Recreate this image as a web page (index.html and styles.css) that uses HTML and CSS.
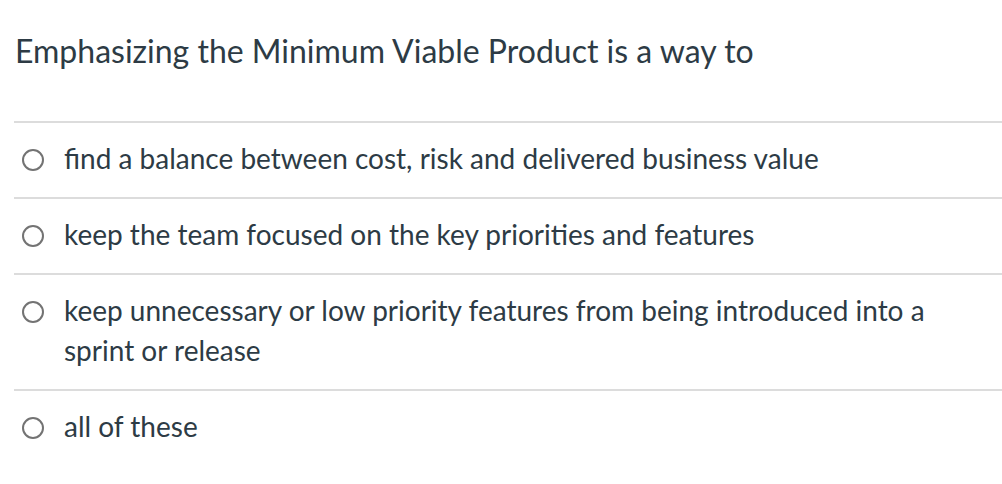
FILE: index.html
```html
<!DOCTYPE html>
<html lang="en">
<head>
<meta charset="utf-8">
<title>Quiz question</title>
<link rel="stylesheet" href="styles.css">
</head>
<body>
<div class="question">
  <div class="question-text">Emphasizing the Minimum Viable Product is a way to</div>
  <div class="answers">
    <label class="answer"><span class="radio"></span><span class="answer-text">find a balance between cost, risk and delivered business value</span></label>
    <label class="answer"><span class="radio"></span><span class="answer-text">keep the team focused on the key priorities and features</span></label>
    <label class="answer"><span class="radio"></span><span class="answer-text">keep unnecessary or low priority features from being introduced into a sprint or release</span></label>
    <label class="answer"><span class="radio"></span><span class="answer-text">all of these</span></label>
  </div>
</div>
</body>
</html>
```

FILE: styles.css
```css
html, body {
  margin: 0;
  padding: 0;
  background: #ffffff;
}
body {
  font-family: Lato, "Open Sans", "Liberation Sans", sans-serif;
  color: #2d3b45;
}
.question {
  padding-left: 14px;
}
.question-text {
  font-size: 32px;
  line-height: 40px;
  padding: 31px 0 50px 1px;
}
.answers {
  display: flex;
  flex-direction: column;
}
.answer {
  display: flex;
  align-items: flex-start;
  border-top: 2px solid #dcdcdc;
  padding: 15px 10px 19px 8px;
  font-size: 28px;
  line-height: 40px;
}
.radio {
  flex: none;
  width: 18px;
  height: 18px;
  border: 2px solid #737373;
  border-radius: 50%;
  margin-top: 11px;
  margin-right: 20px;
}
.answer-text {
  flex: 1;
}
```
